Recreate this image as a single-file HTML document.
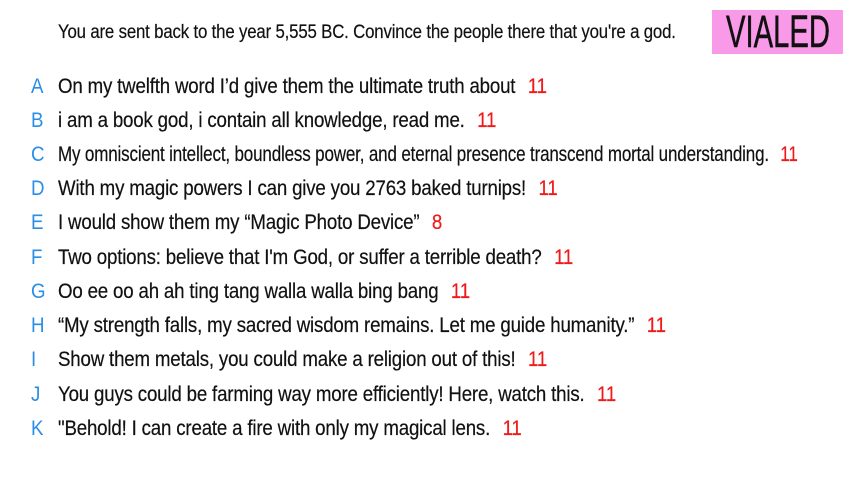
<!DOCTYPE html>
<html><head><meta charset="utf-8"><style>
body{margin:0;width:853px;height:480px;background:#fff;overflow:hidden;position:relative;font-family:"Liberation Sans",sans-serif;color:#111}
.t{position:absolute;left:58px;top:22px;font-size:19px;letter-spacing:-0.2px;transform:scaleX(0.885);transform-origin:0 0;white-space:nowrap;-webkit-text-stroke:0.2px #111}
.box{position:absolute;left:712px;top:10px;width:131px;height:44px;background:#f99ae8}
.box div{position:absolute;left:14px;top:-1px;font-size:45px;line-height:46px;transform:scaleX(0.65);transform-origin:0 0;white-space:nowrap;-webkit-text-stroke:0.5px #111}
.r{position:absolute;left:0;height:30px;line-height:30px;font-size:21px;white-space:nowrap;letter-spacing:-0.2px}
.r b{font-weight:normal;position:absolute;left:31px;color:#2a8ee6;transform:scaleX(0.89);transform-origin:0 0}
.r span{position:absolute;left:58px;transform:scaleX(0.89);transform-origin:0 0;-webkit-text-stroke:0.2px #111}
.r i{font-style:normal;color:#f01818;margin-left:14px;-webkit-text-stroke:0.2px #f01818}
</style></head><body>
<div class="t">You are sent back to the year 5,555 BC. Convince the people there that you're a god.</div>
<div class="box"><div>VIALED</div></div>
<div class="r" style="top:72px"><b>A</b><span>On my twelfth word I’d give them the ultimate truth about<i>11</i></span></div>
<div class="r" style="top:106px"><b>B</b><span>i am a book god, i contain all knowledge, read me.<i>11</i></span></div>
<div class="r" style="top:140px"><b>C</b><span style="transform:scaleX(0.81)">My omniscient intellect, boundless power, and eternal presence transcend mortal understanding.<i>11</i></span></div>
<div class="r" style="top:174px"><b>D</b><span>With my magic powers I can give you 2763 baked turnips!<i>11</i></span></div>
<div class="r" style="top:208px"><b>E</b><span>I would show them my “Magic Photo Device”<i>8</i></span></div>
<div class="r" style="top:243px"><b>F</b><span>Two options: believe that I'm God, or suffer a terrible death?<i>11</i></span></div>
<div class="r" style="top:277px"><b>G</b><span>Oo ee oo ah ah ting tang walla walla bing bang<i>11</i></span></div>
<div class="r" style="top:311px"><b>H</b><span>“My strength falls, my sacred wisdom remains. Let me guide humanity.”<i>11</i></span></div>
<div class="r" style="top:345px"><b>I</b><span>Show them metals, you could make a religion out of this!<i>11</i></span></div>
<div class="r" style="top:380px"><b>J</b><span>You guys could be farming way more efficiently! Here, watch this.<i>11</i></span></div>
<div class="r" style="top:414px"><b>K</b><span>"Behold! I can create a fire with only my magical lens.<i>11</i></span></div>
</body></html>
